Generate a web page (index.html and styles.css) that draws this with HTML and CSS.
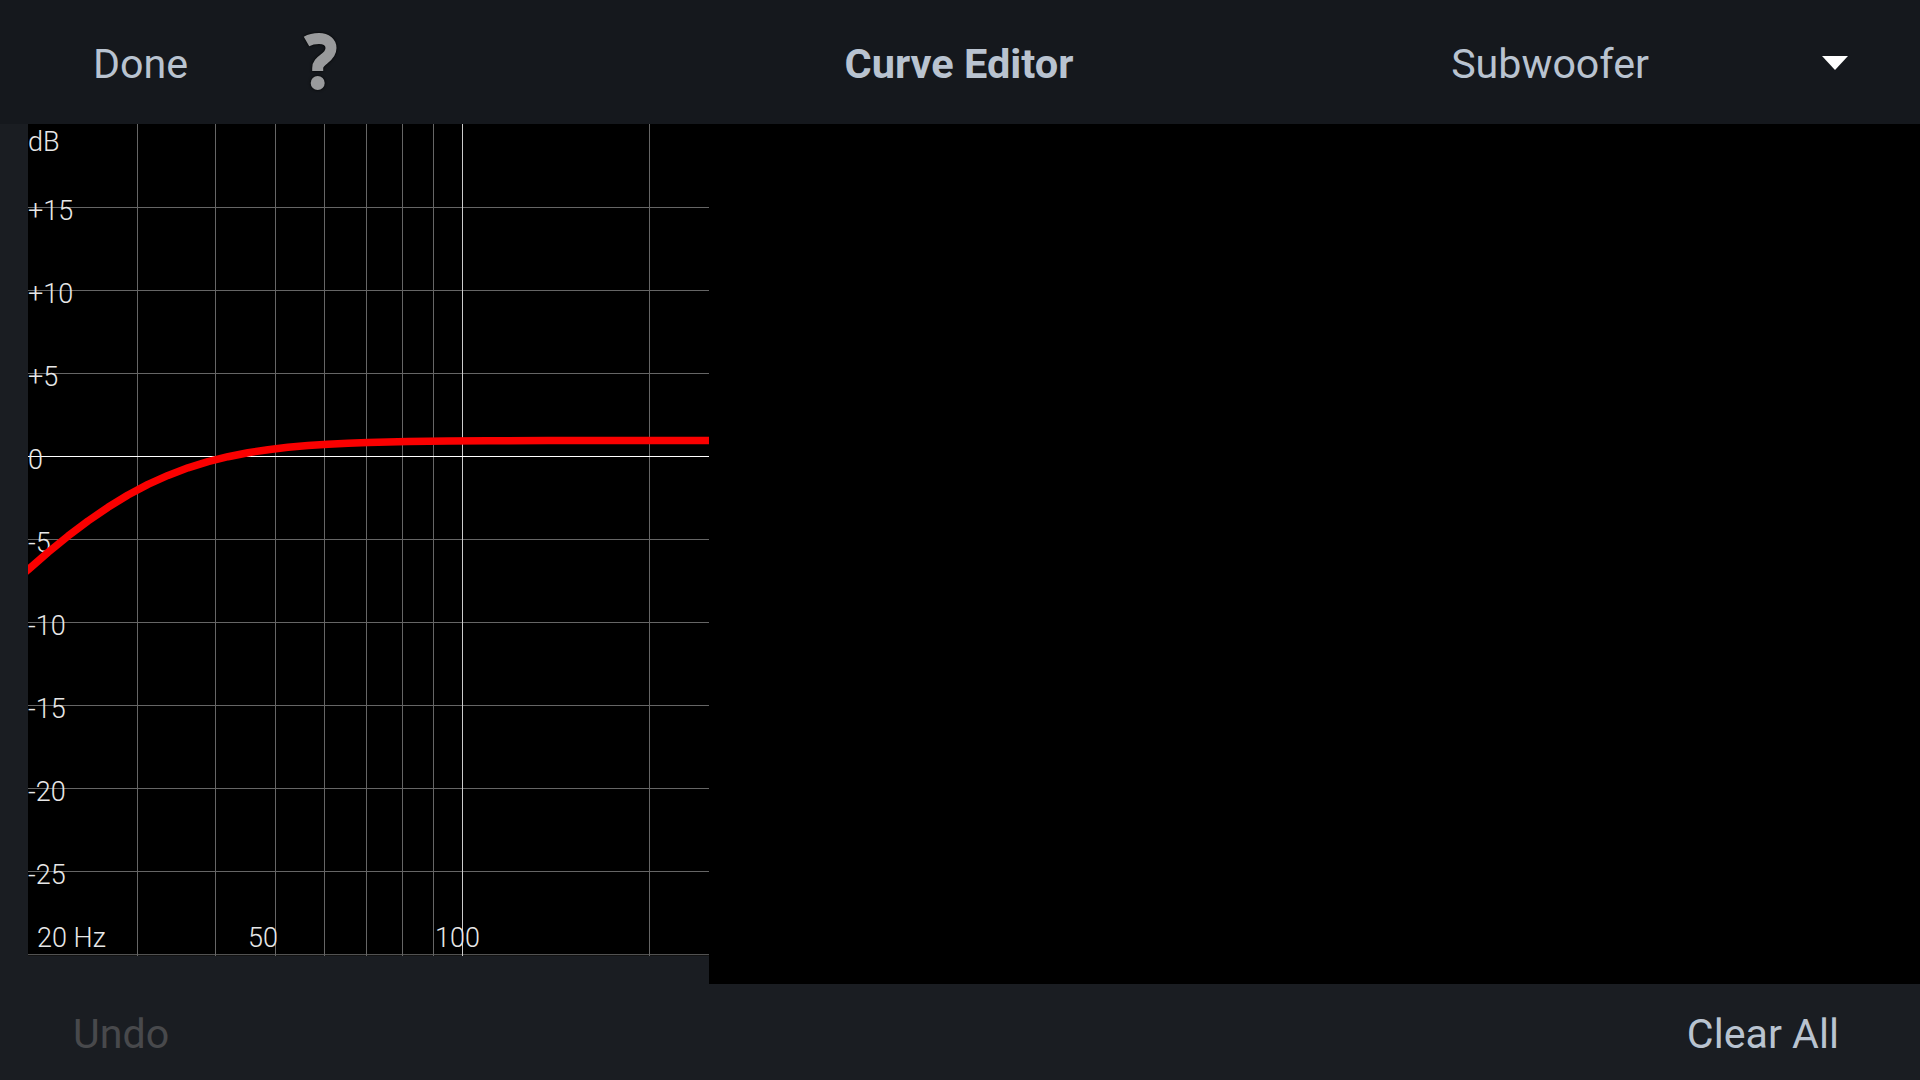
FILE: index.html
```html
<!DOCTYPE html>
<html lang="en">
<head>
<meta charset="utf-8">
<title>Curve Editor</title>
<link rel="stylesheet" href="styles.css">
</head>
<body>
<div class="app">
  <header class="topbar">
    <div class="top-left">
      <span class="btn">Done</span>
      <svg class="help" width="40" height="64" viewBox="300 30 40 64" role="img" aria-label="Help">
        <path class="help-hook" d="M305.5 41.5C309 39.5 313 38.5 318 38.5C325.5 38.5 330 42.5 330 48C330 53 327 56 323 59C319 62 316.7 64 316.7 68V71"/>
        <circle class="help-dot" cx="316.7" cy="83" r="7"/>
      </svg>
    </div>
    <div class="title">Curve Editor</div>
    <div class="top-right">
      <span class="btn">Subwoofer</span>
      <span class="caret"></span>
    </div>
  </header>
  <main class="middle">
    <div class="graph-col">
      <svg class="graph" width="681" height="832" viewBox="28 124 681 832">
        <g class="grid">
          <path d="M137.5 124V956M215.5 124V956M275.5 124V956M324.5 124V956M366.5 124V956M402.5 124V956M433.5 124V956M649.5 124V956"/>
          <path d="M28 207.5H709M28 290.5H709M28 373.5H709M28 539.5H709M28 622.5H709M28 705.5H709M28 788.5H709M28 871.5H709M28 954.7H709"/>
        </g>
        <path class="grid-major" d="M462.5 124V956"/>
        <path class="grid-zero" d="M28 456.5H709"/>
        <g class="labels">
          <text x="28" y="151">dB</text>
          <text x="28" y="220">+15</text>
          <text x="28" y="303">+10</text>
          <text x="28" y="386">+5</text>
          <text x="28" y="469">0</text>
          <text x="28" y="552">-5</text>
          <text x="28" y="635">-10</text>
          <text x="28" y="718">-15</text>
          <text x="28" y="801">-20</text>
          <text x="28" y="884">-25</text>
          <text x="37" y="947">20 Hz</text>
          <text x="248" y="947">50</text>
          <text x="435" y="947">100</text>
        </g>
        <polyline class="curve" points="8,586 28,569.8 48,552.4 68,536.1 88,521 108,507.3 128,495 148,484.4 168,475.4 188,467.8 208,461.6 228,456.7 248,452.7 268,449.7 288,447.3 308,445.6 328,444.2 348,443.2 368,442.5 388,441.9 408,441.5 428,441.2 448,441 488,440.7 548,440.5 711,440.5"/>
      </svg>
    </div>
    <div class="canvas"></div>
  </main>
  <footer class="bottombar">
    <span class="btn disabled">Undo</span>
    <span class="btn">Clear All</span>
  </footer>
</div>
</body>
</html>
```

FILE: styles.css
```css
html, body {
  margin: 0;
  padding: 0;
  height: 100%;
  overflow: hidden;
}

body {
  background: #1a1d22;
  font-family: Roboto, "Liberation Sans", sans-serif;
}

.app {
  display: flex;
  flex-direction: column;
  width: 1920px;
  height: 1080px;
}

.topbar {
  display: grid;
  grid-template-columns: 1fr auto 1fr;
  align-items: center;
  box-sizing: border-box;
  height: 124px;
  padding-top: 4px;
  background: #15181d;
  flex: none;
}

.top-left {
  display: flex;
  align-items: center;
  gap: 113px;
  padding-left: 93px;
}

.top-right {
  display: flex;
  align-items: center;
  justify-content: flex-end;
  gap: 173px;
  padding-right: 71px;
}

.btn {
  font-size: 41.2px;
  line-height: 48px;
  color: #b9c3d0;
}

.btn.disabled {
  color: #48494c;
}

.title {
  font-size: 41.5px;
  line-height: 48px;
  font-weight: 700;
  color: #b9c3d0;
  margin-right: 2px;
}

.help {
  display: block;
  margin-top: -4px;
  filter: drop-shadow(0 0 1.5px #000);
}

.help-hook {
  fill: none;
  stroke: #999a9c;
  stroke-width: 11;
}

.help-dot {
  fill: #999a9c;
}

.caret {
  width: 0;
  height: 0;
  border-left: 13.5px solid transparent;
  border-right: 13.5px solid transparent;
  border-top: 14px solid #fff;
  margin-top: -2px;
  margin-right: 1px;
}

.middle {
  display: flex;
  height: 860px;
  flex: none;
}

.graph-col {
  width: 681px;
  margin-left: 28px;
  flex: none;
}

.graph {
  display: block;
  background: #000;
}

.canvas {
  flex: 1;
  background: #000;
}

.grid path {
  fill: none;
  stroke: #666;
  stroke-width: 1;
}

.grid-major {
  fill: none;
  stroke: #ccc;
  stroke-width: 1;
}

.grid-zero {
  fill: none;
  stroke: #fff;
  stroke-width: 1;
}

.labels text {
  font-family: Roboto, sans-serif;
  font-size: 27px;
  font-weight: 300;
  fill: #e8e8e8;
}

.curve {
  fill: none;
  stroke: #fa0000;
  stroke-width: 7.5;
  stroke-linejoin: round;
}

.bottombar {
  display: flex;
  flex: 1;
  align-items: center;
  justify-content: space-between;
  box-sizing: border-box;
  padding: 4px 81px 0 73px;
}
```
